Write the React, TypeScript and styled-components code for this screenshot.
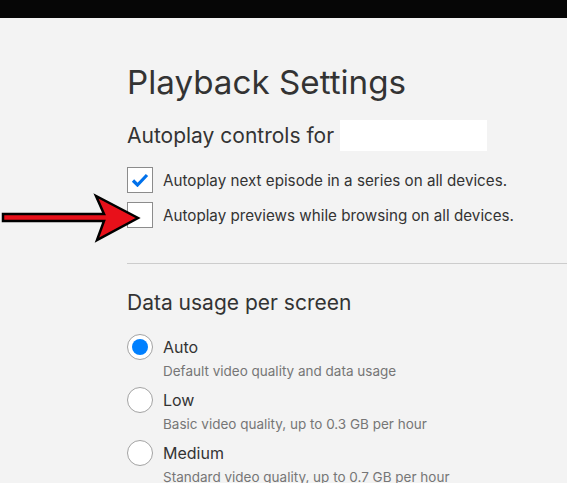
import React from 'react';
import styled, {createGlobalStyle} from 'styled-components';

const Global = createGlobalStyle`
  html, body { margin: 0; padding: 0; }
  body {
    background: #f3f3f3;
    font-family: Inter, "Noto Sans", "Liberation Sans", sans-serif;
    color: #333;
    overflow: hidden;
  }
`;

const TopBar = styled.header`
  height: 18px;
  background: #060606;
`;

const Page = styled.main`
  position: relative;
  padding: 44px 0 0 127px;
`;

const Title = styled.h1`
  margin: 0;
  font-size: 33.2px;
  font-weight: 400;
  line-height: 40px;
  color: #333;
`;

const Section = styled.section`
  margin-top: 18px;
`;

const SectionTitle = styled.h2`
  margin: 0;
  font-size: 21px;
  font-weight: 400;
  line-height: 28px;
  color: #333;
  display: flex;
  align-items: center;
  gap: 6px;
`;

const Blank = styled.span`
  display: inline-block;
  width: 147px;
  height: 31px;
  background: #fff;
`;

const Options = styled.ul`
  list-style: none;
  margin: 16px 0 0;
  padding: 0;
  display: flex;
  flex-direction: column;
  gap: 9px;
`;

const CheckRow = styled.li`
  display: flex;
  align-items: center;
  gap: 10px;
  font-size: 15.2px;
  color: #333;
`;

const Box = styled.span`
  width: 26px;
  height: 26px;
  box-sizing: border-box;
  background: #fff;
  border: 1px solid #8c8c8c;
  display: flex;
  align-items: center;
  justify-content: center;
  flex-shrink: 0;
`;

const Divider = styled.hr`
  margin: 35px 0 0;
  border: none;
  border-top: 1px solid #ccc;
`;

const DataSection = styled.section`
  margin-top: 25px;
`;

const Radios = styled.ul`
  list-style: none;
  margin: 17px 0 0;
  padding: 0;
  display: flex;
  flex-direction: column;
  gap: 8px;
`;

const RadioRow = styled.li`
  display: grid;
  grid-template-columns: 26px 1fr;
  column-gap: 10px;
  row-gap: 3px;
  align-items: center;
`;

const Circle = styled.span<{ $on?: boolean }>`
  width: 26px;
  height: 26px;
  box-sizing: border-box;
  border-radius: 50%;
  background: #fff;
  border: 1px solid #a3a3a3;
  display: flex;
  align-items: center;
  justify-content: center;
  &::after {
    content: '';
    display: ${p => (p.$on ? 'block' : 'none')};
    width: 16px;
    height: 16px;
    border-radius: 50%;
    background: #0080ff;
  }
`;

const RadioLabel = styled.span`
  font-size: 16px;
  color: #333;
`;

const Hint = styled.span`
  grid-column: 2;
  font-size: 13.5px;
  color: #767676;
`;

const Arrow = styled.svg`
  position: absolute;
  left: 0;
  top: 157px;
`;

const modes = [
  {name: 'Auto', hint: 'Default video quality and data usage', on: true},
  {name: 'Low', hint: 'Basic video quality, up to 0.3 GB per hour'},
  {name: 'Medium', hint: 'Standard video quality, up to 0.7 GB per hour'},
];

function App() {
  return (
    <>
      <Global/>
      <TopBar/>
      <Page>
        <Title>Playback Settings</Title>
        <Section>
          <SectionTitle>Autoplay controls for <Blank/></SectionTitle>
          <Options>
            <CheckRow>
              <Box>
                <svg width="18" height="14" viewBox="0 0 18 14">
                  <path d="M2 7.5 L6.5 12 L16 2" fill="none" stroke="#0071eb" strokeWidth="3.2"/>
                </svg>
              </Box>
              Autoplay next episode in a series on all devices.
            </CheckRow>
            <CheckRow>
              <Box/>
              Autoplay previews while browsing on all devices.
            </CheckRow>
          </Options>
        </Section>
        <Divider/>
        <DataSection>
          <SectionTitle>Data usage per screen</SectionTitle>
          <Radios>
            {modes.map(m => (
              <RadioRow key={m.name}>
                <Circle $on={m.on}/>
                <RadioLabel>{m.name}</RadioLabel>
                <Hint>{m.hint}</Hint>
              </RadioRow>
            ))}
          </Radios>
        </DataSection>
        <Arrow width="150" height="80" viewBox="0 175 150 80">
          <path
            d="M3 214 L104 214 L96 196 L138 218 L97 240 L104 221 L3 221 Z"
            fill="#e8101a"
            stroke="#000"
            strokeWidth="2.5"
            strokeLinejoin="miter"
          />
        </Arrow>
      </Page>
    </>
  );
}

export default App;
